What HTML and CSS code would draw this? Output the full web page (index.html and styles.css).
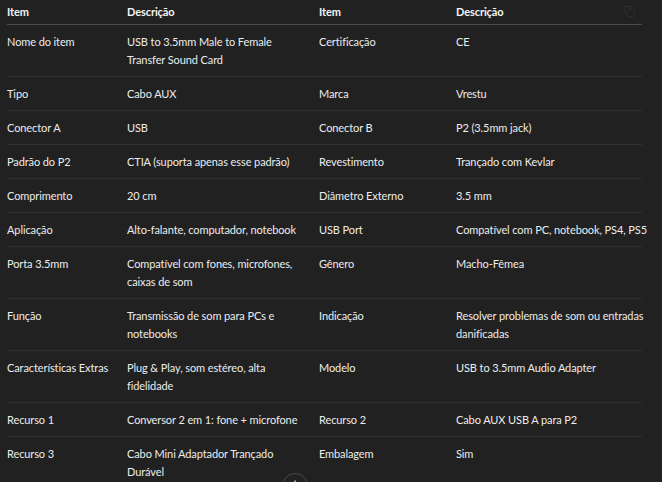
FILE: index.html
```html
<!DOCTYPE html>
<html lang="pt">
<head>
<meta charset="utf-8">
<link rel="stylesheet" href="styles.css">
</head>
<body>
<div class="wrap">
  <table class="spec">
    <colgroup>
      <col class="c1"><col class="c2"><col class="c3"><col class="c4">
    </colgroup>
    <thead>
      <tr><th>Item</th><th>Descrição</th><th>Item</th><th>Descrição</th></tr>
    </thead>
    <tbody>
      <tr><td>Nome do item</td><td>USB to 3.5mm Male to Female<br>Transfer Sound Card</td><td>Certificação</td><td>CE</td></tr>
      <tr><td>Tipo</td><td>Cabo AUX</td><td>Marca</td><td>Vrestu</td></tr>
      <tr><td>Conector A</td><td>USB</td><td>Conector B</td><td>P2 (3.5mm jack)</td></tr>
      <tr><td>Padrão do P2</td><td>CTIA (suporta apenas esse padrão)</td><td>Revestimento</td><td>Trançado com Kevlar</td></tr>
      <tr><td>Comprimento</td><td>20 cm</td><td>Diâmetro Externo</td><td>3.5 mm</td></tr>
      <tr><td>Aplicação</td><td>Alto-falante, computador, notebook</td><td>USB Port</td><td>Compatível com PC, notebook, PS4, PS5</td></tr>
      <tr><td>Porta 3.5mm</td><td>Compatível com fones, microfones,<br>caixas de som</td><td>Gênero</td><td>Macho-Fêmea</td></tr>
      <tr><td>Função</td><td>Transmissão de som para PCs e<br>notebooks</td><td>Indicação</td><td>Resolver problemas de som ou entradas<br>danificadas</td></tr>
      <tr><td>Características Extras</td><td>Plug &amp; Play, som estéreo, alta<br>fidelidade</td><td>Modelo</td><td>USB to 3.5mm Audio Adapter</td></tr>
      <tr><td>Recurso 1</td><td>Conversor 2 em 1: fone + microfone</td><td>Recurso 2</td><td>Cabo AUX USB A para P2</td></tr>
      <tr><td>Recurso 3</td><td>Cabo Mini Adaptador Trançado<br>Durável</td><td>Embalagem</td><td>Sim</td></tr>
    </tbody>
  </table>
  <button class="copy" aria-label="Copiar tabela">
    <svg width="13" height="13" viewBox="0 0 14 14" fill="none" stroke="currentColor" stroke-width="1.2">
      <rect x="4.5" y="4.5" width="8" height="8" rx="2"/>
      <path d="M9.5 2.8V3a1.5 1.5 0 0 0-1.5-1.5H3A1.5 1.5 0 0 0 1.5 3v5A1.5 1.5 0 0 0 3 9.5h1"/>
    </svg>
  </button>
</div>
<button class="scroll-down" aria-label="Rolar para baixo">
  <svg width="12" height="12" viewBox="0 0 12 12" fill="none" stroke="currentColor" stroke-width="1.4" stroke-linecap="round">
    <path d="M6 1v9M2.5 6.5 6 10l3.5-3.5"/>
  </svg>
</button>
</body>
</html>
```
FILE: styles.css
```css
html, body {
  margin: 0;
  background: #212121;
}
body {
  font-family: "Lato", "Open Sans", sans-serif;
  font-size: 11px;
  letter-spacing: -0.1px;
  color: #ececec;
  height: 482px;
  overflow: hidden;
}
.wrap {
  position: relative;
  padding-left: 7px;
}
.spec {
  border-collapse: collapse;
  table-layout: fixed;
  width: 635px;
}
.c1 { width: 112px; }
.c2 { width: 192px; }
.c3 { width: 137px; }
.c4 { width: 194px; }
.spec th, .spec td {
  text-align: left;
  vertical-align: top;
  padding: 8px 8px 7px;
  line-height: 18px;
  white-space: nowrap;
}
.spec th:first-child, .spec td:first-child { padding-left: 0; }
.spec th:last-child, .spec td:last-child { padding-right: 0; }
.spec th {
  font-weight: 700;
  color: #f4f4f4;
  padding-top: 3px;
  padding-bottom: 3px;
  border-bottom: 1px solid #4a4a4a;
}
.spec td {
  border-bottom: 1px solid #303030;
}
.copy {
  position: absolute;
  top: 5px;
  right: 26px;
  background: none;
  border: 0;
  padding: 0;
  color: #2c2c2c;
  display: flex;
}
.scroll-down {
  position: absolute;
  left: 282px;
  top: 473px;
  width: 26px;
  height: 26px;
  border-radius: 50%;
  border: 1px solid #4a4a4a;
  background: #212121;
  color: #d0d0d0;
  padding: 0;
  display: flex;
  align-items: center;
  justify-content: center;
}
```
